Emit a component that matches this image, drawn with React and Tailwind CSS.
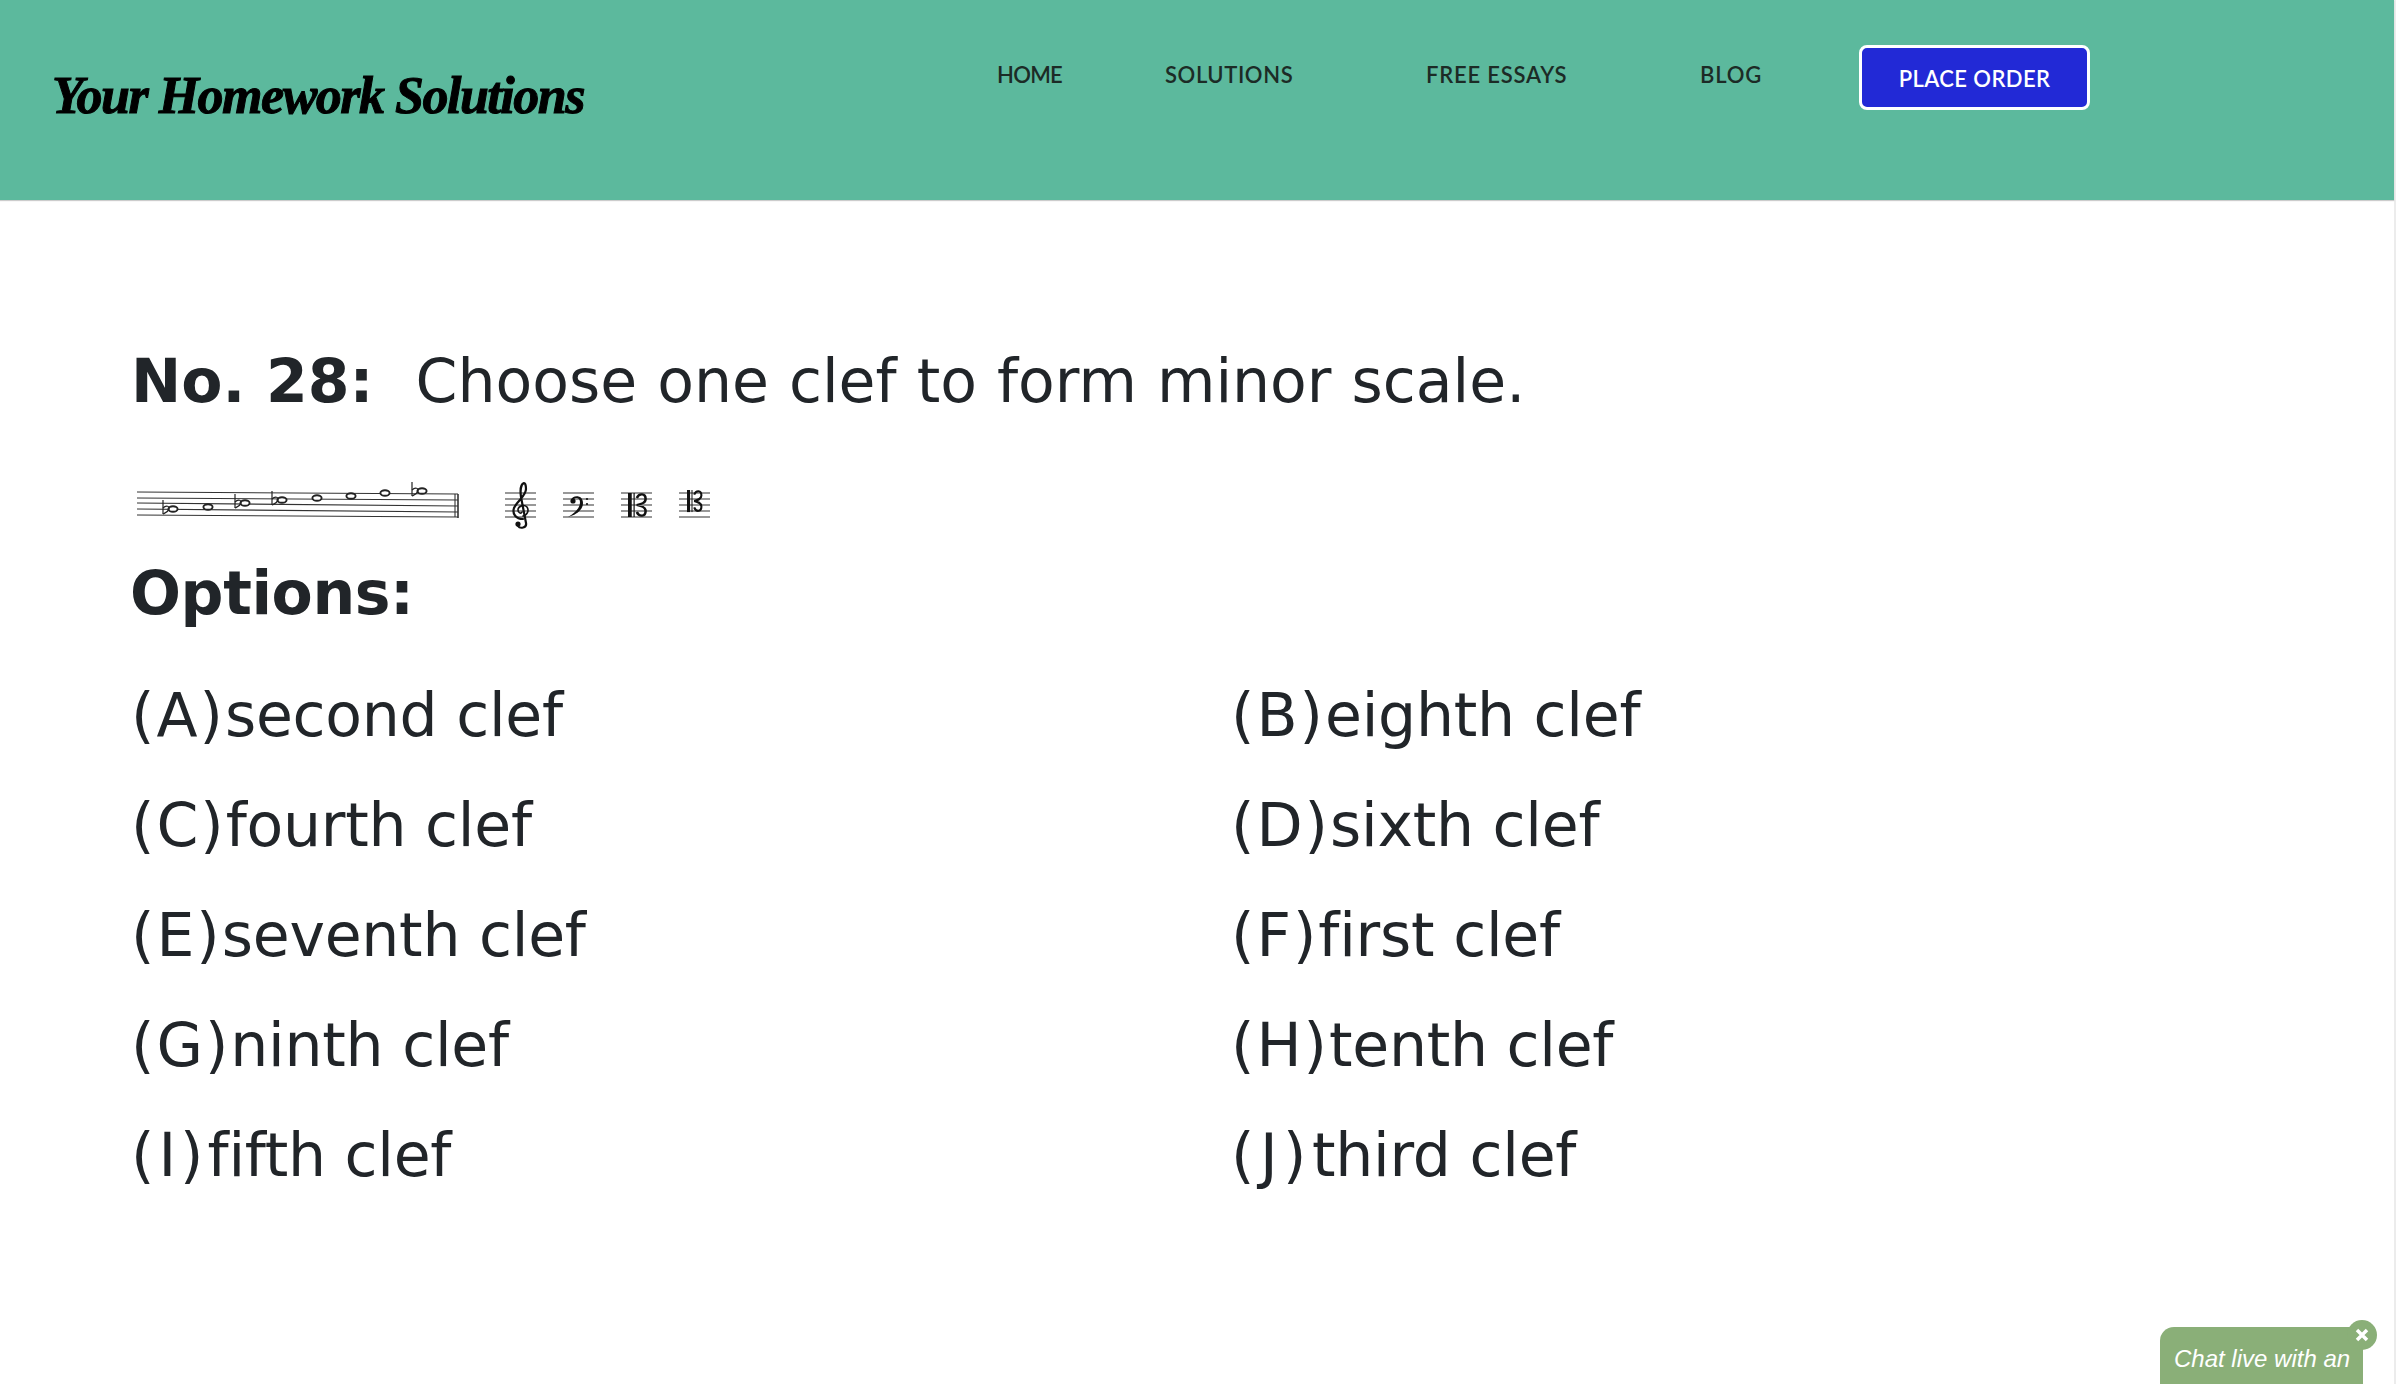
const navLinks = [
  { label: "HOME", className: "w-[168px] tracking-[-0.7px]" },
  { label: "SOLUTIONS", className: "w-[261px] tracking-[0.6px]" },
  { label: "FREE ESSAYS", className: "w-[274px] tracking-[0.8px]" },
  { label: "BLOG", className: "w-[159px] tracking-[0.8px]" },
];

const options = [
  { letter: "(A)", text: "second clef", spacing: "tracking-[2px]" },
  { letter: "(B)", text: "eighth clef", spacing: "tracking-[2px]" },
  { letter: "(C)", text: "fourth clef", spacing: "tracking-[2px]" },
  { letter: "(D)", text: "sixth clef", spacing: "tracking-[2px]" },
  { letter: "(E)", text: "seventh clef", spacing: "tracking-[2px]" },
  { letter: "(F)", text: "first clef", spacing: "tracking-[2px]" },
  { letter: "(G)", text: "ninth clef", spacing: "tracking-[2px]" },
  { letter: "(H)", text: "tenth clef", spacing: "tracking-[2px]" },
  { letter: "(I)", text: "fifth clef", spacing: "tracking-[4px]" },
  { letter: "(J)", text: "third clef", spacing: "tracking-[5.5px]" },
];

const notes = [
  { x: 42, y: 39, flat: true },
  { x: 77, y: 37 },
  { x: 114, y: 33, flat: true },
  { x: 151, y: 30, flat: true },
  { x: 186, y: 28 },
  { x: 220, y: 26 },
  { x: 254, y: 23 },
  { x: 291, y: 21, flat: true },
];

function Flat({ x, y }) {
  return (
    <g fill="none" stroke="#222" strokeWidth="1.2" transform={`translate(${x} ${y})`}>
      <path d="M0 -9V5" />
      <path d="M0 -1C3 -4 7 -3 6 0C5 3 2 4 0 5" />
    </g>
  );
}

function Staff({ x }) {
  return (
    <g stroke="#444" strokeWidth="1.1">
      {[23, 29, 35, 41, 47].map((y) => (
        <line key={y} x1={x} x2={x + 31} y1={y} y2={y} />
      ))}
    </g>
  );
}

function CClef({ x, y, sx = 1, sy = 1 }) {
  return (
    <g transform={`translate(${x} ${y}) scale(${sx} ${sy})`}>
      <rect x="0" y="0" width="3.4" height="24" fill="#111" />
      <rect x="5" y="0" width="1.1" height="24" fill="#111" />
      <path
        d="M8 5C10 0 16 0 16 6C16 10 12 11 8 12C12 13 16 14 16 18C16 24 10 24 8 19"
        fill="none"
        stroke="#111"
        strokeWidth="2.3"
      />
    </g>
  );
}

function MusicFigure() {
  return (
    <svg className="block h-[70px] w-[600px]" viewBox="0 0 600 70">
      <g stroke="#333" strokeWidth="1.1">
        <line x1="6" x2="327" y1="22" y2="24" />
        <line x1="6" x2="327" y1="28" y2="30" />
        <line x1="6" x2="327" y1="33" y2="36" />
        <line x1="6" x2="327" y1="39" y2="42" />
        <line x1="6" x2="327" y1="45" y2="47" />
        <line x1="324" x2="324" y1="24" y2="47" />
        <line x1="327" x2="327" y1="24" y2="48" strokeWidth="1.6" />
      </g>
      {notes.map((n) => (
        <g key={n.x}>
          <ellipse cx={n.x} cy={n.y} rx="4.6" ry="2.8" fill="white" stroke="#222" strokeWidth="1.9" />
          {n.flat && <Flat x={n.x - 10} y={n.y} />}
        </g>
      ))}

      <Staff x={374} />
      <g fill="none" stroke="#111" strokeLinecap="round">
        <path strokeWidth="2.2" d="M392 49C385 49 381 44 383 38C386 31 395 26 395 19C395 15 394 13 393 13C390 14 389 20 390 27L395 53C396 58 389 59 387 56" />
        <path strokeWidth="1.6" d="M392 46C397 45 398 40 396 37C393 34 387 36 387 40C387 43 390 44 391 42" />
      </g>
      <circle cx="387" cy="54" r="2.6" fill="#111" />

      <Staff x={432} />
      <path d="M440 30C441 25 452 24 452 33C452 40 445 45 437 47C444 43 449 38 449 32C449 28 445 27 443 29Z" fill="#111" />
      <circle cx="442" cy="31" r="2.6" fill="#111" />
      <circle cx="456" cy="29" r="1.1" fill="#111" />
      <circle cx="456" cy="34" r="1.1" fill="#111" />

      <Staff x={490} />
      <CClef x={497} y={23} sx={1.1} />

      <Staff x={548} />
      <CClef x={556} y={20} sx={0.9} sy={0.92} />
    </svg>
  );
}

export default function App() {
  return (
    <div className="relative min-h-[1384px] w-full overflow-hidden bg-white font-['DejaVu_Sans',sans-serif] text-[#212529]">
      <div className="min-h-[1384px] w-[2396px] border-r-2 border-[#ececec]">
        <header className="flex h-[200px] items-start bg-[#5cb99d] shadow-[0_1px_1px_rgba(0,0,0,0.2)]">
          <div className="ml-[52px] mt-[60px] w-[945px] shrink-0 font-['Liberation_Serif',serif] text-[52px] font-bold italic leading-[72px] tracking-[-1.5px] text-black [-webkit-text-stroke:1px_black]">
            Your Homework Solutions
          </div>
          <nav className="mt-[45px] flex items-start">
            {navLinks.map((link) => (
              <a
                key={link.label}
                className={`${link.className} pt-[17px] font-['Lato',sans-serif] text-[22px] font-semibold leading-[26px] text-[#1c2b26]`}
              >
                {link.label}
              </a>
            ))}
            <a className="flex h-[65px] w-[231px] items-center justify-center rounded-[8px] border-[3px] border-white bg-[#2229d6] pt-[1px] font-['Lato',sans-serif] text-[22px] font-semibold tracking-[0.4px] text-white">
              PLACE ORDER
            </a>
          </nav>
        </header>

        <main className="pl-[131px] pt-[145px]">
          <h1 className="text-[60px] leading-[72px]">
            <span className="font-bold">No. 28:</span>
            <span className="ml-[42px] [word-spacing:1px]">Choose one clef to form minor scale.</span>
          </h1>
          <div className="mt-[53px]">
            <MusicFigure />
          </div>
          <h2 className="-ml-[1px] mt-[17px] text-[60px] font-bold leading-[72px] tracking-[-0.4px]">Options:</h2>
          <div className="mt-[50px] grid w-[2200px] grid-cols-2 gap-y-[38px]">
            {options.map((option) => (
              <div key={option.letter} className="text-[60px] leading-[72px] tracking-[-0.25px]">
                <span className={option.spacing}>{option.letter}</span>
                {option.text}
              </div>
            ))}
          </div>
        </main>
      </div>

      <div className="absolute left-[2160px] top-[1327px] h-[57px] w-[203px] rounded-t-[14px] bg-[#8aaf78] pl-[14px] pt-[17px] font-['Liberation_Sans',sans-serif] text-[24px] italic leading-[30px] text-white">
        Chat live with an
      </div>
      <div className="absolute left-[2347px] top-[1320px] flex h-[30px] w-[30px] items-center justify-center rounded-full bg-[#8aaf78]">
        <svg width="14" height="14" viewBox="0 0 14 14">
          <path d="M2 2L12 12M12 2L2 12" stroke="white" strokeWidth="3.5" />
        </svg>
      </div>
    </div>
  );
}
